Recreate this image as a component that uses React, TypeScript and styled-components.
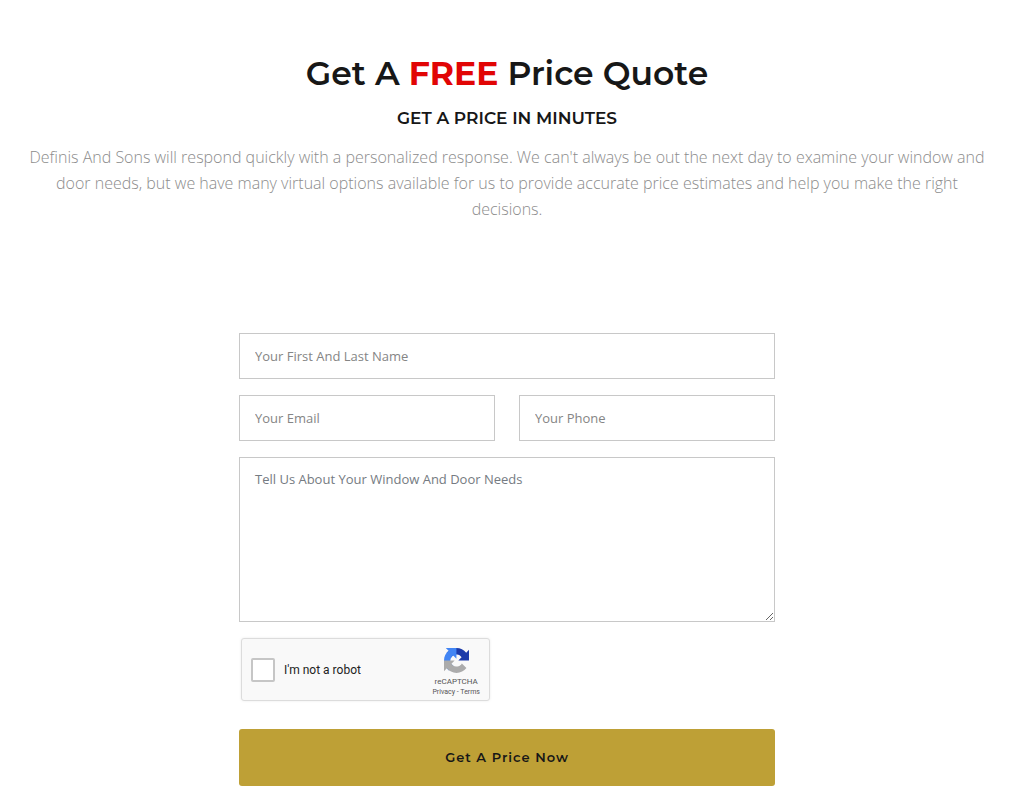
import React from "react";
import styled, { createGlobalStyle } from "styled-components";

const display = `Montserrat, Inter, "Open Sans", sans-serif`;
const body = `"Open Sans", "Noto Sans", sans-serif`;

const GlobalStyle = createGlobalStyle`
  *, *::before, *::after { box-sizing: border-box; }
  body { margin: 0; background: #fff; color: #171717; font-family: ${body}; }
`;

const Page = styled.main`
  padding: 53px 34px 22px 24px;
`;

const Intro = styled.header`
  text-align: center;
`;

const Title = styled.h1`
  margin: 0;
  font: 600 33px/40px ${display};
  strong { color: #e10505; font-weight: 700; }
`;

const Subtitle = styled.h2`
  margin: 15px 0 0;
  font: 600 17px/20px ${display};
`;

const Lead = styled.p`
  margin: 16px 0 0;
  color: #8c8c8c;
  font-size: 16px;
  font-weight: 300;
  line-height: 26px;
`;

const Form = styled.form`
  display: flex;
  flex-direction: column;
  gap: 16px;
  max-width: 536px;
  margin: 111px auto 0;
`;

const Row = styled.div`
  display: grid;
  grid-template-columns: 1fr 1fr;
  gap: 24px;
`;

const Input = styled.input`
  display: block;
  width: 100%;
  height: 46px;
  padding: 0 15px;
  border: 1px solid #c8c8c8;
  border-radius: 0;
  background: #fff;
  font: 400 13px/20px ${body};
  &::placeholder { color: #858585; opacity: 1; }
`;

const Message = styled.textarea`
  display: block;
  width: 100%;
  height: 165px;
  padding: 11px 15px;
  border: 1px solid #c8c8c8;
  border-radius: 0;
  background: #fff;
  font: 400 13px/20px ${body};
  resize: vertical;
  &::placeholder { color: #757b82; opacity: 1; }
`;

const Captcha = styled.div`
  display: flex;
  align-items: center;
  justify-content: space-between;
  width: 249px;
  height: 63px;
  margin-left: 2px;
  padding: 0 9px 0 9px;
  border: 1px solid #dcdcdc;
  border-radius: 3px;
  background: #f9f9f9;
  box-shadow: 0 0 3px rgba(0, 0, 0, 0.08);
  font-family: Roboto, sans-serif;
`;

const Check = styled.label`
  display: flex;
  align-items: center;
  gap: 9px;
  color: #222;
  font-size: 12px;
  line-height: 16px;
`;

const Checkbox = styled.input`
  appearance: none;
  width: 24px;
  height: 24px;
  margin: 0;
  border: 2px solid #c6c6c6;
  border-radius: 2px;
  background: #fff;
  &:checked { background: #4285f4; }
`;

const Brand = styled.div`
  display: flex;
  flex-direction: column;
  align-items: center;
  padding-top: 6px;
  color: #555;
  font-size: 8px;
  line-height: 10px;
  svg { display: block; margin-bottom: 4px; }
`;

const Legal = styled.small`
  font-size: 7px;
  line-height: 10px;
  a { color: inherit; text-decoration: none; }
`;

const Submit = styled.button`
  width: 100%;
  height: 57px;
  margin-top: 12px;
  padding: 0 0 2px;
  border: 0;
  border-radius: 3px;
  background: #bea036;
  color: #171717;
  font: 600 13px/20px ${display};
  letter-spacing: 1px;
  cursor: pointer;
`;

const CaptchaLogo = () => (
  <svg width="25" height="25" viewBox="0 0 64 64" aria-hidden="true">
    <path fill="#1c3aa9" d="M64 31.955l-.033-1.37V4.687l-7.16 7.16C50.948 4.674 42.033.093 32.05.093c-10.4 0-19.622 4.96-25.458 12.64l11.736 11.86a15.55 15.55 0 0 1 4.754-5.334c2.05-1.6 4.952-2.906 8.968-2.906.485 0 .86.057 1.135.163 4.976.393 9.288 3.14 11.828 7.124l-8.307 8.307L64 31.953" />
    <path fill="#4285f4" d="M31.862.094l-1.37.033H4.594l7.16 7.16C4.58 13.147 0 22.06 0 32.046c0 10.4 4.96 19.622 12.64 25.458L24.5 45.768a15.55 15.55 0 0 1-5.334-4.754c-1.6-2.05-2.906-4.952-2.906-8.968 0-.485.057-.86.163-1.135.393-4.976 3.14-9.288 7.124-11.828l8.307 8.307L31.86.095" />
    <path fill="#ababab" d="M.001 32.045l.033 1.37v25.898l7.16-7.16c5.86 7.173 14.774 11.754 24.76 11.754 10.4 0 19.622-4.96 25.458-12.64l-11.736-11.86a15.55 15.55 0 0 1-4.754 5.334c-2.05 1.6-4.952 2.906-8.968 2.906-.485 0-.86-.057-1.135-.163-4.976-.393-9.288-3.14-11.828-7.124l8.307-8.307c-10.522.04-22.4.066-27.295-.005" />
  </svg>
);

export default function App() {
  return (
    <>
      <GlobalStyle />
      <Page>
        <Intro>
          <Title>Get A <strong>FREE</strong> Price Quote</Title>
          <Subtitle>GET A PRICE IN MINUTES</Subtitle>
          <Lead>
            Definis And Sons will respond quickly with a personalized response. We can't always be out
            the next day to examine your window and door needs, but we have many virtual options
            available for us to provide accurate price estimates and help you make the right decisions.
          </Lead>
        </Intro>
        <Form onSubmit={(e) => e.preventDefault()}>
          <Input type="text" aria-label="Your First And Last Name" placeholder="Your First And Last Name" />
          <Row>
            <Input type="email" aria-label="Your Email" placeholder="Your Email" />
            <Input type="tel" aria-label="Your Phone" placeholder="Your Phone" />
          </Row>
          <Message
            aria-label="Tell Us About Your Window And Door Needs"
            placeholder="Tell Us About Your Window And Door Needs"
          />
          <Captcha>
            <Check>
              <Checkbox type="checkbox" />
              I'm not a robot
            </Check>
            <Brand>
              <CaptchaLogo />
              <span>reCAPTCHA</span>
              <Legal><a href="#privacy">Privacy</a> - <a href="#terms">Terms</a></Legal>
            </Brand>
          </Captcha>
          <Submit type="submit">Get A Price Now</Submit>
        </Form>
      </Page>
    </>
  );
}
